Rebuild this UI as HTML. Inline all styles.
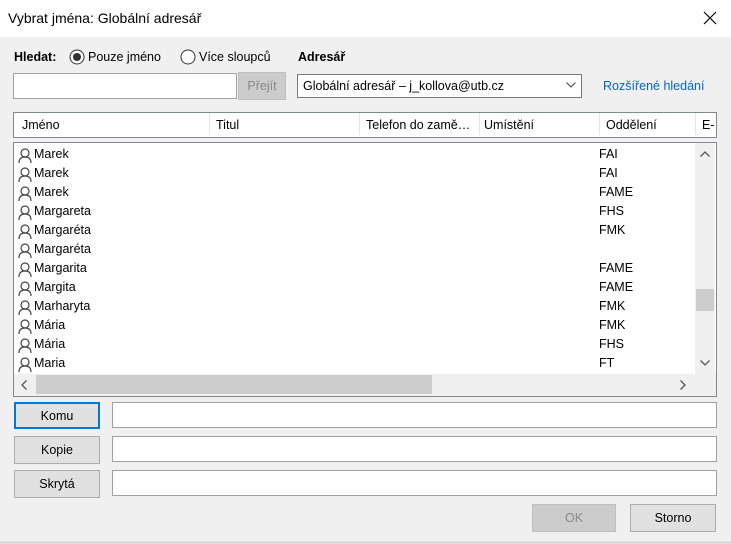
<!DOCTYPE html>
<html><head><meta charset="utf-8"><style>
*{box-sizing:border-box;margin:0;padding:0}
body{width:731px;height:544px;background:#f0f0f0;font-family:"Liberation Sans",sans-serif;font-size:12.5px;color:#000;position:relative;overflow:hidden}
.a{position:absolute}
.title{left:0;top:0;width:731px;height:37px;background:#fff}
.inp{background:#fff;border:1px solid #a0a0a0}
.btn{background:#e1e1e1;border:1px solid #adadad;text-align:center}
.row{position:absolute;left:4px;height:19px;line-height:19px;width:660px}
.row svg{position:absolute;left:0;top:3px}
.row .n{position:absolute;left:16px}
.row .d{position:absolute;left:581px}
.hd{position:absolute;top:0;height:22px;line-height:24px;border-right:1px solid #e5e5e5}
</style></head><body>
<div class="a title"></div>
<div class="a" style="left:8px;top:10px;font-size:14px">Vybrat jména: Globální adresář</div>
<svg class="a" style="left:703px;top:11px" width="14" height="14"><path d="M1 1L13 13M13 1L1 13" stroke="#000" stroke-width="1.2"/></svg>

<div class="a" style="left:14px;top:50px;font-weight:bold">Hledat:</div>
<svg class="a" style="left:69px;top:49px" width="16" height="16"><circle cx="8" cy="8" r="7" fill="#fff" stroke="#333"/><circle cx="8" cy="8" r="4" fill="#333"/></svg>
<div class="a" style="left:88px;top:50px">Pouze jméno</div>
<svg class="a" style="left:180px;top:49px" width="16" height="16"><circle cx="8" cy="8" r="7" fill="#fff" stroke="#333"/></svg>
<div class="a" style="left:199px;top:50px">Více sloupců</div>
<div class="a" style="left:298px;top:50px;font-weight:bold">Adresář</div>

<div class="a inp" style="left:13px;top:73px;width:224px;height:26px"></div>
<div class="a btn" style="left:238px;top:72px;width:48px;height:28px;line-height:27px;color:#888;background:#ccc;border-color:#bfbfbf">Přejít</div>
<div class="a inp" style="left:297px;top:74px;width:285px;height:24px;border-color:#7a7a7a;line-height:22px;padding-left:5px">Globální adresář – j_kollova@utb.cz</div>
<svg class="a" style="left:566px;top:82px" width="10" height="6"><path d="M0.5 0.5L5 5L9.5 0.5" stroke="#444" fill="none"/></svg>
<div class="a" style="left:603px;top:79px;color:#0066cc">Rozšířené hledání</div>

<div class="a inp" style="left:13px;top:112px;width:704px;height:26px;border-color:#828790;overflow:hidden">
<div class="hd" style="left:0;width:196px;padding-left:8px">Jméno</div>
<div class="hd" style="left:196px;width:150px;padding-left:6px">Titul</div>
<div class="hd" style="left:346px;width:120px;padding-left:6px">Telefon do zamě…</div>
<div class="hd" style="left:466px;width:120px;padding-left:4px">Umístění</div>
<div class="hd" style="left:586px;width:96px;padding-left:6px">Oddělení</div>
<div class="hd" style="left:682px;width:30px;padding-left:6px;border:none">E-</div>
</div>

<div class="a inp" style="left:13px;top:142px;width:704px;height:255px;border-color:#828790;overflow:hidden">
<div id="rows"></div>
<div class="a" style="left:681px;top:0;width:20px;height:231px;background:#f0f0f0"></div>
<div class="a" style="left:682px;top:146px;width:18px;height:22px;background:#cdcdcd"></div>
<svg class="a" style="left:686px;top:8px" width="10" height="6"><path d="M0.5 5.5L5 1L9.5 5.5" stroke="#555" fill="none" stroke-width="1.3"/></svg>
<svg class="a" style="left:686px;top:217px" width="10" height="6"><path d="M0.5 0.5L5 5L9.5 0.5" stroke="#555" fill="none" stroke-width="1.3"/></svg>
<div class="a" style="left:0;top:231px;width:702px;height:22px;background:#f0f0f0"></div>
<div class="a" style="left:22px;top:232px;width:396px;height:19px;background:#cdcdcd"></div>
<svg class="a" style="left:7px;top:237px" width="6" height="10"><path d="M5.5 0.5L1 5L5.5 9.5" stroke="#555" fill="none" stroke-width="1.3"/></svg>
<svg class="a" style="left:666px;top:237px" width="6" height="10"><path d="M0.5 0.5L5 5L0.5 9.5" stroke="#555" fill="none" stroke-width="1.3"/></svg>
<div class="row" style="top:2px"><svg width="14" height="15"><circle cx="7" cy="5" r="4" fill="none" stroke="#444" stroke-width="1.2"/><path d="M1 15C1 10 4 9 7 9S13 10 13 15" fill="none" stroke="#444" stroke-width="1.2"/></svg><span class="n">Marek</span><span class="d">FAI</span></div>
<div class="row" style="top:21px"><svg width="14" height="15"><circle cx="7" cy="5" r="4" fill="none" stroke="#444" stroke-width="1.2"/><path d="M1 15C1 10 4 9 7 9S13 10 13 15" fill="none" stroke="#444" stroke-width="1.2"/></svg><span class="n">Marek</span><span class="d">FAI</span></div>
<div class="row" style="top:40px"><svg width="14" height="15"><circle cx="7" cy="5" r="4" fill="none" stroke="#444" stroke-width="1.2"/><path d="M1 15C1 10 4 9 7 9S13 10 13 15" fill="none" stroke="#444" stroke-width="1.2"/></svg><span class="n">Marek</span><span class="d">FAME</span></div>
<div class="row" style="top:59px"><svg width="14" height="15"><circle cx="7" cy="5" r="4" fill="none" stroke="#444" stroke-width="1.2"/><path d="M1 15C1 10 4 9 7 9S13 10 13 15" fill="none" stroke="#444" stroke-width="1.2"/></svg><span class="n">Margareta</span><span class="d">FHS</span></div>
<div class="row" style="top:78px"><svg width="14" height="15"><circle cx="7" cy="5" r="4" fill="none" stroke="#444" stroke-width="1.2"/><path d="M1 15C1 10 4 9 7 9S13 10 13 15" fill="none" stroke="#444" stroke-width="1.2"/></svg><span class="n">Margaréta</span><span class="d">FMK</span></div>
<div class="row" style="top:97px"><svg width="14" height="15"><circle cx="7" cy="5" r="4" fill="none" stroke="#444" stroke-width="1.2"/><path d="M1 15C1 10 4 9 7 9S13 10 13 15" fill="none" stroke="#444" stroke-width="1.2"/></svg><span class="n">Margaréta</span></div>
<div class="row" style="top:116px"><svg width="14" height="15"><circle cx="7" cy="5" r="4" fill="none" stroke="#444" stroke-width="1.2"/><path d="M1 15C1 10 4 9 7 9S13 10 13 15" fill="none" stroke="#444" stroke-width="1.2"/></svg><span class="n">Margarita</span><span class="d">FAME</span></div>
<div class="row" style="top:135px"><svg width="14" height="15"><circle cx="7" cy="5" r="4" fill="none" stroke="#444" stroke-width="1.2"/><path d="M1 15C1 10 4 9 7 9S13 10 13 15" fill="none" stroke="#444" stroke-width="1.2"/></svg><span class="n">Margita</span><span class="d">FAME</span></div>
<div class="row" style="top:154px"><svg width="14" height="15"><circle cx="7" cy="5" r="4" fill="none" stroke="#444" stroke-width="1.2"/><path d="M1 15C1 10 4 9 7 9S13 10 13 15" fill="none" stroke="#444" stroke-width="1.2"/></svg><span class="n">Marharyta</span><span class="d">FMK</span></div>
<div class="row" style="top:173px"><svg width="14" height="15"><circle cx="7" cy="5" r="4" fill="none" stroke="#444" stroke-width="1.2"/><path d="M1 15C1 10 4 9 7 9S13 10 13 15" fill="none" stroke="#444" stroke-width="1.2"/></svg><span class="n">Mária</span><span class="d">FMK</span></div>
<div class="row" style="top:192px"><svg width="14" height="15"><circle cx="7" cy="5" r="4" fill="none" stroke="#444" stroke-width="1.2"/><path d="M1 15C1 10 4 9 7 9S13 10 13 15" fill="none" stroke="#444" stroke-width="1.2"/></svg><span class="n">Mária</span><span class="d">FHS</span></div>
<div class="row" style="top:211px"><svg width="14" height="15"><circle cx="7" cy="5" r="4" fill="none" stroke="#444" stroke-width="1.2"/><path d="M1 15C1 10 4 9 7 9S13 10 13 15" fill="none" stroke="#444" stroke-width="1.2"/></svg><span class="n">Maria</span><span class="d">FT</span></div>
</div>

<div class="a btn" style="left:14px;top:402px;width:86px;height:27px;line-height:25px;border:2px solid #0078d7">Komu</div>
<div class="a btn" style="left:14px;top:436px;width:86px;height:28px;line-height:27px">Kopie</div>
<div class="a btn" style="left:14px;top:470px;width:86px;height:28px;line-height:27px">Skrytá</div>
<div class="a inp" style="left:112px;top:402px;width:605px;height:26px"></div>
<div class="a inp" style="left:112px;top:436px;width:605px;height:26px"></div>
<div class="a inp" style="left:112px;top:470px;width:605px;height:26px"></div>

<div class="a btn" style="left:532px;top:504px;width:84px;height:28px;line-height:27px;background:#ccc;border-color:#bfbfbf;color:#888">OK</div>
<div class="a btn" style="left:630px;top:504px;width:86px;height:28px;line-height:27px">Storno</div>
<div class="a" style="left:0;top:541px;width:731px;height:3px;background:#ddd"></div>
</body></html>
